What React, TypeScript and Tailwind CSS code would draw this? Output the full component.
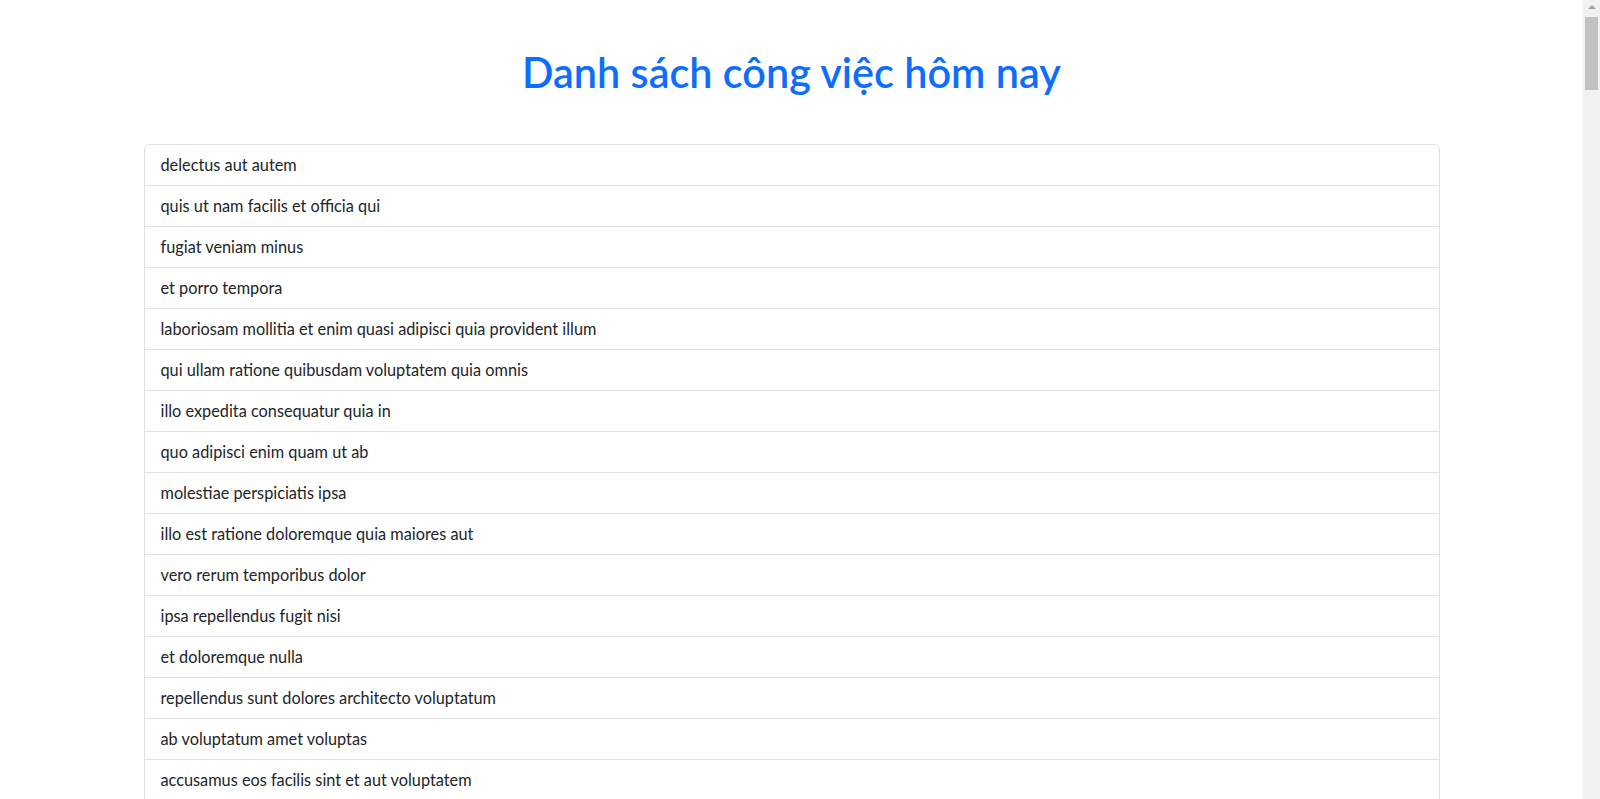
const todos = [
  "delectus aut autem",
  "quis ut nam facilis et officia qui",
  "fugiat veniam minus",
  "et porro tempora",
  "laboriosam mollitia et enim quasi adipisci quia provident illum",
  "qui ullam ratione quibusdam voluptatem quia omnis",
  "illo expedita consequatur quia in",
  "quo adipisci enim quam ut ab",
  "molestiae perspiciatis ipsa",
  "illo est ratione doloremque quia maiores aut",
  "vero rerum temporibus dolor",
  "ipsa repellendus fugit nisi",
  "et doloremque nulla",
  "repellendus sunt dolores architecto voluptatum",
  "ab voluptatum amet voluptas",
  "accusamus eos facilis sint et aut voluptatem",
  "quo laboriosam deleniti aut qui",
  "dolorum est consequatur ea mollitia in culpa",
  "molestiae ipsa aut voluptatibus pariatur dolor nihil",
  "ullam nobis libero sapiente ad optio sint",
];

export default function App() {
  return (
    <div className="flex min-h-screen bg-white font-['Lato',sans-serif] text-[#212529]">
      <main className="min-w-0 flex-1">
        <div className="mx-auto w-full max-w-[1320px] px-3">
          <h1 className="my-12 text-center text-[41.4px] leading-[48px] font-semibold text-[#0d6efd]">
            Danh sách công việc hôm nay
          </h1>
          <ul className="mb-12 flex flex-col rounded-[6px] border border-[#dee2e6]">
            {todos.map((title, i) => (
              <li
                key={i}
                className={
                  i === 0
                    ? "px-4 py-2 text-[16.3px] leading-6"
                    : "border-t border-[#dee2e6] px-4 py-2 text-[16.3px] leading-6"
                }
              >
                {title}
              </li>
            ))}
          </ul>
        </div>
      </main>
      {/* fake window scrollbar, as in the screenshot */}
      <aside className="flex w-[17px] shrink-0 flex-col items-center bg-[#f1f1f1] pt-[5px]">
        <div className="h-0 w-0 border-x-[4px] border-b-[4px] border-x-transparent border-b-[#a3a3a3]" />
        <div className="mt-[8px] h-[73px] w-[13px] bg-[#c1c1c1]" />
      </aside>
    </div>
  );
}
